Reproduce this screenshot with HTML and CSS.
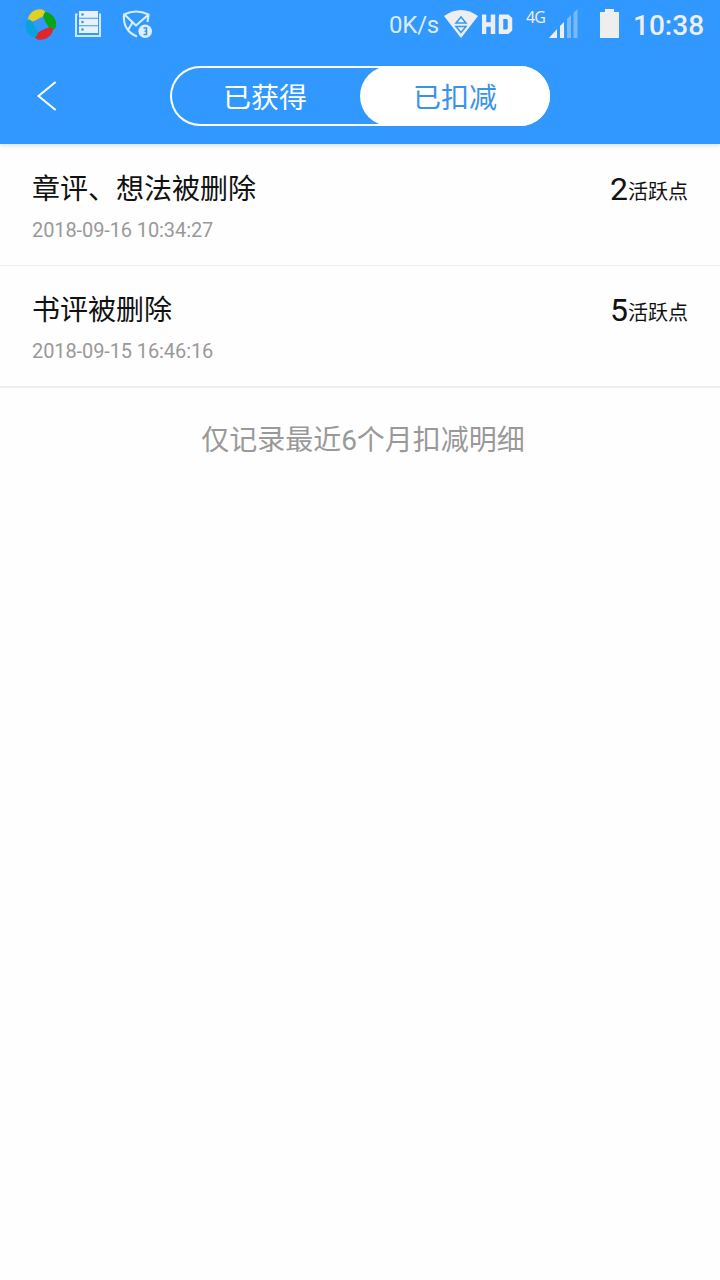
FILE: index.html
```html
<!DOCTYPE html>
<html lang="zh-CN">
<head>
<meta charset="utf-8">
<title>已扣减</title>
<link rel="stylesheet" href="styles.css">
</head>
<body>
<header class="top">
  <div class="status">
    <svg class="app-icon" width="32" height="48" viewBox="25 0 32 48">
      <path fill="#e2d020" d="M28 20C28 13 36 8 42 9.500C47 11 46 14 42 17C37 19 35 22 30 21.500C28 21.500 28 21 28 20Z"/>
      <path fill="#06a516" d="M46 12C54 14 58 22 55.500 28C53 31 50 30 48 26C46 22 43 19 43.500 15C44 13 45 12 46 12Z"/>
      <path fill="#e0252b" d="M53 30C52 36 45 41 38 39.500C34 38.500 34 35 38 32.500C43 30 45 28 50 27.500C52 27.500 53 28.500 53 30Z"/>
      <path fill="#08a3dd" d="M35 37C28 36 24 29 26 22C28 18 31 19 33 23C34 27 38 29 38 33C37 36 36 37 35 37Z"/>
    </svg>
    <svg class="doc-icon" width="28" height="48" viewBox="74 0 28 48">
      <path fill="none" stroke="#cfeaff" stroke-width="2" d="M77.500 14.500H76V36H100V14.500H99"/>
      <path fill="#e9f2f9" d="M79 11H98V17.800H79ZM79 18.800H98V25.300H79ZM79 26.300H98V33H79Z"/>
      <g fill="#3098ff"><circle cx="82.500" cy="14.500" r="1.300"/><circle cx="82.500" cy="22" r="1.300"/><circle cx="82.500" cy="29.500" r="1.300"/></g>
    </svg>
    <svg class="mail-icon" width="31" height="48" viewBox="122 0 31 48">
      <path fill="none" stroke="#d8edff" stroke-width="2.200" stroke-linejoin="round" d="M137 36.500C128 33 123 25 124 14.500Q136 8.500 148.500 14.500L147.500 22M125 15L136 25.500L148 15M128 30L132.500 22.500"/>
      <circle cx="145.200" cy="31.200" r="6.800" fill="#deefff"/>
      <path fill="none" stroke="#3098ff" stroke-width="1.600" d="M143.500 28H146.500V34.500H143.500M144.500 31.200H146.500"/>
    </svg>
    <span class="speed">0K/s</span>
    <svg class="wifi-icon" width="34" height="48" viewBox="444 0 34 48">
      <path fill="#eee" d="M444 16Q461 4 478 16L461 38Z"/>
      <path fill="none" stroke="#3098ff" stroke-width="1.500" d="M456 23L461 17L466 23ZM456 26.500H466L461 32.500Z"/>
    </svg>
    <svg class="hd-icon" width="31" height="48" viewBox="482 0 31 48" role="img" aria-label="HD">
      <path fill="none" stroke="#eee" stroke-width="4.500" d="M484 14.500V34M493 14.500V34M484 24.500H493M501 16.700V31.800H507.500L510 29.500V19L507.500 16.700H499"/>
    </svg>
    <span class="network">4G</span>
    <svg class="signal-icon" width="30" height="48" viewBox="549 0 30 48">
      <path fill="#eee" d="M549 38L557 29V38ZM560 26L564 22V38H560Z"/>
      <path fill="#79baff" d="M567 19L571 15V38H567ZM573.500 13L577.500 9V38H573.500Z"/>
    </svg>
    <svg class="battery-icon" width="19" height="48" viewBox="600 0 19 48">
      <path fill="#eee" d="M605 9H614V12H619V38H600V12H605Z"/>
    </svg>
    <span class="clock">10:38</span>
  </div>
  <nav class="nav">
    <svg class="back" width="22" height="32" viewBox="36 80 22 32">
      <path fill="none" stroke="#fff" stroke-width="2" stroke-linecap="round" d="M55 82.500L38.500 96L55 109.500"/>
    </svg>
    <div class="tabs">
      <span class="tab">已获得</span>
      <span class="tab active">已扣减</span>
    </div>
  </nav>
</header>
<main>
  <section class="record">
    <div>
      <h2 class="title">章评、想法被删除</h2>
      <p class="date">2018-09-16 10:34:27</p>
    </div>
    <p class="points"><span class="num">2</span>活跃点</p>
  </section>
  <section class="record last">
    <div>
      <h2 class="title">书评被删除</h2>
      <p class="date">2018-09-15 16:46:16</p>
    </div>
    <p class="points"><span class="num">5</span>活跃点</p>
  </section>
  <p class="note">仅记录最近6个月扣减明细</p>
</main>
</body>
</html>
```
FILE: styles.css
```css
* { box-sizing: border-box; }
body {
  margin: 0;
  min-height: 1280px;
  background: #fefefe;
  color: #111;
  font-family: Roboto, "Noto Sans CJK SC", sans-serif;
}
h2, p { margin: 0; font-weight: 400; }
svg { display: block; flex: none; }
.top {
  height: 144px;
  background: #3098ff;
  box-shadow: 0 2px 4px rgba(0, 0, 0, 0.12);
}
.status {
  height: 48px;
  padding-left: 25px;
  display: flex;
  color: #eee;
  white-space: nowrap;
}
.doc-icon { margin-left: 17px; }
.mail-icon { margin-left: 20px; }
.speed {
  width: 55px;
  margin-left: 236px;
  font-size: 24px;
  line-height: 50px;
  letter-spacing: -0.2px;
  color: #dcebfa;
}
.hd-icon { margin-left: 4px; }
.network {
  width: 23px;
  margin-left: 13px;
  font: 400 16px/34px "Noto Sans", sans-serif;
  letter-spacing: -1px;
}
.battery-icon { margin-left: 21px; }
.clock {
  margin-left: 14px;
  font-size: 28px;
  font-weight: 500;
  line-height: 51px;
}
.nav {
  height: 96px;
  padding: 18px 0 0 36px;
  display: flex;
}
.back { margin-top: 14px; }
.tabs {
  width: 380px;
  height: 60px;
  margin-left: 112px;
  display: flex;
  border-radius: 30px;
  box-shadow: inset 0 0 0 2px #fff;
}
.tab {
  width: 190px;
  height: 60px;
  color: #fff;
  font-size: 28px;
  line-height: 65px;
  text-align: center;
}
.active {
  border-radius: 30px;
  background: #fff;
  color: #3793ec;
}
.record {
  height: 122px;
  padding: 26px 32px 0;
  display: flex;
  justify-content: space-between;
  border-bottom: 1px solid #eee;
}
.last {
  padding-top: 25px;
  border-bottom-width: 2px;
}
.title { font-size: 28px; line-height: 40px; }
.date {
  margin-top: 8px;
  color: #999;
  font-size: 20px;
  line-height: 24px;
  letter-spacing: -0.1px;
}
.points { font-size: 20px; line-height: 38px; }
.num {
  font-size: 32px;
  vertical-align: -1px;
}
.note {
  margin-top: 33px;
  padding-left: 6px;
  color: #999;
  font-size: 28px;
  line-height: 40px;
  text-align: center;
}
```
